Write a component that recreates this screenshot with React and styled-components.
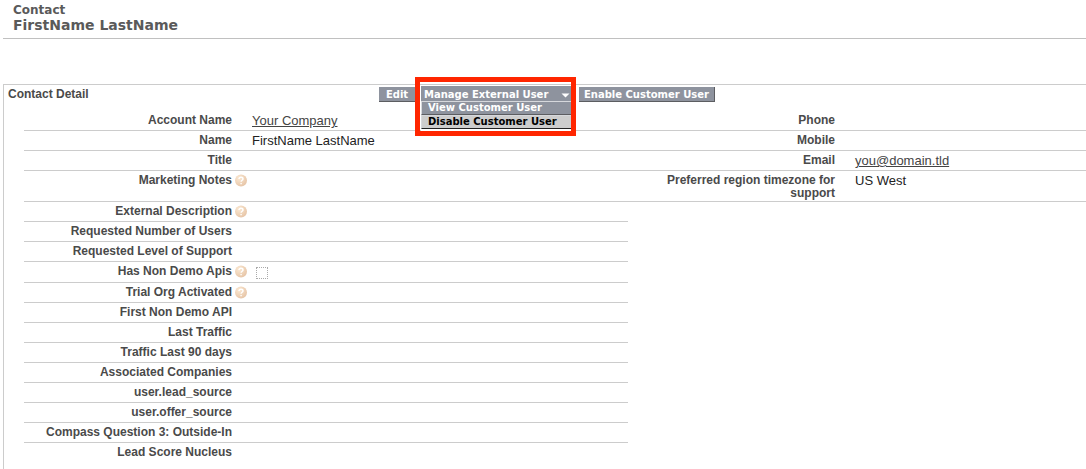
import React from "react";
import styled, { createGlobalStyle } from "styled-components";

const GlobalStyle = createGlobalStyle`
  body {
    margin: 0;
    background: #fff;
    color: #333;
    font-family: Arial, "Liberation Sans", sans-serif;
    font-size: 12px;
  }
`;

const heading = `"DejaVu Sans", Verdana, sans-serif`;

const Page = styled.main`
  padding-left: 3px;
  overflow: hidden;
`;

const Header = styled.header`
  height: 35px;
  padding: 3px 10px 0;
  border-bottom: 1px solid #c0c0c0;
  margin-bottom: 45px;
  color: #5a5a5a;
  font-family: ${heading};
  font-weight: bold;
`;

const PageType = styled.h1`
  margin: 0;
  font-size: 12px;
  line-height: 15px;
`;

const PageName = styled.h2`
  margin: 0;
  font-size: 14px;
  line-height: 15px;
`;

const Panel = styled.section`
  padding-bottom: 8px;
  border-top: 1px solid #ccc;
  border-left: 1px solid #ccc;
`;

const Toolbar = styled.div`
  display: flex;
  align-items: flex-start;
  height: 26px;
`;

const PanelTitle = styled.h3`
  width: 371px;
  margin: 0;
  padding-left: 4px;
  color: #4a4a4a;
  font-size: 12px;
  line-height: 18px;
`;

const Button = styled.button`
  margin: 2px 0 0;
  padding: 2px 0 0;
  width: ${(props) => props.$width};
  height: 15px;
  border: solid #5c5d61;
  border-width: 0 1px 1px 0;
  background: #8e939e;
  color: #fff;
  font: bold 10px/12px ${heading};
  white-space: nowrap;
`;

const MenuWrapper = styled.div`
  position: relative;
  width: 150px;
  margin: 1px 8px 0 5px;

  /* red call-out frame */
  &::after {
    content: "";
    position: absolute;
    inset: -9px -5px -35px -6px;
    border: 5px solid #ff2600;
    pointer-events: none;
  }
`;

const MenuButton = styled(Button)`
  display: flex;
  align-items: center;
  justify-content: space-between;
  margin: 0;
  padding: 3px 1px 0 3px;
  border-width: 0;
`;

const Menu = styled.ul`
  position: absolute;
  top: 15px;
  left: 0;
  right: 0;
  margin: 0;
  padding: 0 0 2px;
  background: #fff;
  list-style: none;
`;

const MenuItem = styled.button`
  display: block;
  width: 100%;
  height: 14px;
  padding: 0 0 0 6px;
  border: solid #d6d8dc;
  border-width: 1px 0 1px 1px;
  border-bottom-color: ${(props) => (props.$active ? "#222" : "#5c5d61")};
  background: ${(props) => (props.$active ? "#cdcdcd" : "#8e939e")};
  color: ${(props) => (props.$active ? "#000" : "#fff")};
  font: bold 10px/12px ${heading};
  text-align: left;
  white-space: nowrap;
`;

const Details = styled.table`
  width: calc(100% - 20px);
  margin-left: 20px;
  border-collapse: separate;
  border-spacing: 0;
  table-layout: fixed;
`;

const LabelCell = styled.th`
  height: ${(props) => props.$height || 19}px;
  padding: 0;
  border-bottom: ${(props) => (props.$last ? 0 : 1)}px solid #ccc;
  vertical-align: top;
`;

const Label = styled.div`
  display: flex;
  justify-content: flex-end;
  padding: 3px 0 1px 2px;
  color: #4a4a4a;
  font-size: 12px;
  line-height: 13px;
  text-align: right;
`;

const HelpSlot = styled.span`
  flex: none;
  width: 17px;
  height: 13px;
  padding-left: 3px;
  text-align: left;
`;

const DataCell = styled.td`
  padding: 2px 0 0;
  border-bottom: ${(props) => (props.$last ? 0 : 1)}px solid #ccc;
  color: #222;
  font-size: 13px;
  line-height: 15px;
  vertical-align: top;
`;

const DataLink = styled.a`
  color: #444;
`;

const Checkbox = styled.input`
  appearance: none;
  display: block;
  width: 12px;
  height: 12px;
  margin: 3px 4px 0;
  border: 1px dotted #aaa;
`;

const HelpIcon = () => (
  <svg width="12" height="13" viewBox="0 0 12 13" role="img" aria-label="Help">
    <defs>
      <radialGradient id="help" cx="35%" cy="30%" r="75%">
        <stop offset="0" stopColor="#fbe9d3" />
        <stop offset="1" stopColor="#e6c4a6" />
      </radialGradient>
    </defs>
    <circle cx="6" cy="6.5" r="6" fill="url(#help)" />
    <path
      d="M4 5.1c0-1.2.9-1.9 2-1.9s2 .7 2 1.7c0 1.3-1.9 1.4-1.9 2.9M6.1 9v1.2"
      fill="none"
      stroke="#fff"
      strokeWidth="1.4"
    />
  </svg>
);

const rows = [
  [
    { label: "Account Name", value: <DataLink href="#">Your Company</DataLink> },
    { label: "Phone" },
  ],
  [{ label: "Name", value: "FirstName LastName" }, { label: "Mobile" }],
  [
    { label: "Title" },
    { label: "Email", value: <DataLink href="#">you@domain.tld</DataLink> },
  ],
  [
    { label: "Marketing Notes", help: true, height: 30 },
    { label: "Preferred region timezone for support", value: "US West" },
  ],
  [{ label: "External Description", help: true }],
  [{ label: "Requested Number of Users" }],
  [{ label: "Requested Level of Support" }],
  [
    {
      label: "Has Non Demo Apis",
      help: true,
      height: 20,
      value: <Checkbox type="checkbox" aria-label="Has Non Demo Apis" />,
    },
  ],
  [{ label: "Trial Org Activated", help: true }],
  [{ label: "First Non Demo API" }],
  [{ label: "Last Traffic" }],
  [{ label: "Traffic Last 90 days" }],
  [{ label: "Associated Companies" }],
  [{ label: "user.lead_source" }],
  [{ label: "user.offer_source" }],
  [{ label: "Compass Question 3: Outside-In" }],
  [{ label: "Lead Score Nucleus" }],
];

const Field = ({ field, last }) => (
  <>
    <LabelCell scope="row" $height={field.height} $last={last}>
      <Label>
        {field.label}
        <HelpSlot>{field.help && <HelpIcon />}</HelpSlot>
      </Label>
    </LabelCell>
    <DataCell $last={last}>{field.value}</DataCell>
  </>
);

const App = () => {
  return (
    <Page>
      <GlobalStyle />
      <Header>
        <PageType>Contact</PageType>
        <PageName>FirstName LastName</PageName>
      </Header>

      <Panel>
        <Toolbar>
          <PanelTitle>Contact Detail</PanelTitle>
          <Button $width="37px">Edit</Button>
          <MenuWrapper>
            <MenuButton $width="100%" aria-expanded="true">
              Manage External User
              <svg width="9" height="5" viewBox="0 0 9 5">
                <path d="M0.5 0.5h8l-4 4z" fill="#fff" />
              </svg>
            </MenuButton>
            <Menu>
              <li>
                <MenuItem>View Customer User</MenuItem>
              </li>
              <li>
                <MenuItem $active>Disable Customer User</MenuItem>
              </li>
            </Menu>
          </MenuWrapper>
          <Button $width="136px">Enable Customer User</Button>
        </Toolbar>

        <Details>
          <colgroup>
            <col width="228" />
            <col width="376" />
            <col width="227" />
            <col />
          </colgroup>
          <tbody>
            {rows.map((fields, index) => (
              <tr key={index}>
                {fields.map((field) => (
                  <Field
                    key={field.label}
                    field={field}
                    last={index === rows.length - 1}
                  />
                ))}
              </tr>
            ))}
          </tbody>
        </Details>
      </Panel>
    </Page>
  );
};

export default App;
